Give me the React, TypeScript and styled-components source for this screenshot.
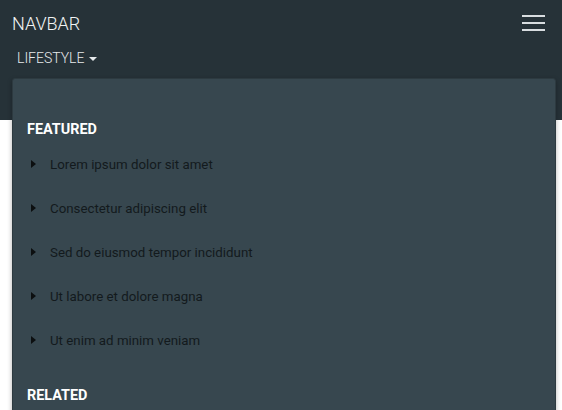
import React from "react";
import styled, { createGlobalStyle } from "styled-components";

const GlobalStyle = createGlobalStyle`
  html, body {
    margin: 0;
    padding: 0;
    background: #fff;
    font-family: Roboto, "Liberation Sans", sans-serif;
  }
`;

const featured = [
  "Lorem ipsum dolor sit amet",
  "Consectetur adipiscing elit",
  "Sed do eiusmod tempor incididunt",
  "Ut labore et dolore magna",
  "Ut enim ad minim veniam",
];

const App: React.FC = () => {
  return (
    <Page>
      <GlobalStyle />
      <Navbar>
        <TopRow>
          <Brand>NAVBAR</Brand>
          <Toggler aria-label="menu">
            <span />
            <span />
            <span />
          </Toggler>
        </TopRow>
        <NavLink>
          LIFESTYLE
          <Caret />
        </NavLink>
      </Navbar>
      <Dropdown>
        <Header>FEATURED</Header>
        <ItemList>
          {featured.map((t) => (
            <Item key={t}>
              <Bullet />
              {t}
            </Item>
          ))}
        </ItemList>
        <Header $gap={24}>RELATED</Header>
      </Dropdown>
    </Page>
  );
};

const Page = styled.div`
  position: relative;
  height: 410px;
  overflow: hidden;
  background: #fff;
`;

const Navbar = styled.nav`
  height: 120px;
  background: #263238;
  box-sizing: border-box;
  padding: 0 12px;
`;

const TopRow = styled.div`
  display: flex;
  align-items: center;
  justify-content: space-between;
  height: 46px;
`;

const Brand = styled.span`
  color: #f2f4f5;
  font-size: 18px;
  font-weight: 300;
`;

const Toggler = styled.button`
  display: flex;
  flex-direction: column;
  gap: 5px;
  width: 23px;
  margin-right: 5px;
  padding: 0;
  background: none;
  border: none;
  span {
    display: block;
    height: 2px;
    background: #d8dde0;
  }
`;

const NavLink = styled.div`
  display: flex;
  align-items: center;
  height: 24px;
  padding-left: 5px;
  color: #e6eaec;
  font-size: 14px;
  font-weight: 300;
`;

const Caret = styled.span`
  margin-left: 5px;
  margin-top: 1px;
  width: 0;
  height: 0;
  border-left: 4px solid transparent;
  border-right: 4px solid transparent;
  border-top: 4px solid #e6eaec;
`;

const Dropdown = styled.div`
  position: absolute;
  top: 78px;
  left: 12px;
  right: 6px;
  height: 340px;
  background: #37474f;
  border: 1px solid #2d3a40;
  border-radius: 3px;
  box-shadow: 0 2px 5px rgba(0, 0, 0, 0.3);
  padding-top: 41px;
  box-sizing: border-box;
`;

const Header = styled.div<{ $gap?: number }>`
  margin-top: ${(p) => p.$gap ?? 0}px;
  padding-left: 14px;
  height: 20px;
  line-height: 20px;
  color: #fff;
  font-size: 14.4px;
  font-weight: 700;
`;

const ItemList = styled.ul`
  list-style: none;
  margin: 2px 0 0;
  padding: 0;
`;

const Item = styled.li`
  display: flex;
  align-items: center;
  height: 44px;
  padding-left: 18px;
  color: #131a1d;
  font-size: 13.3px;
`;

const Bullet = styled.span`
  width: 0;
  height: 0;
  margin-right: 14px;
  border-top: 4px solid transparent;
  border-bottom: 4px solid transparent;
  border-left: 5px solid #0c0f10;
`;

export default App;
